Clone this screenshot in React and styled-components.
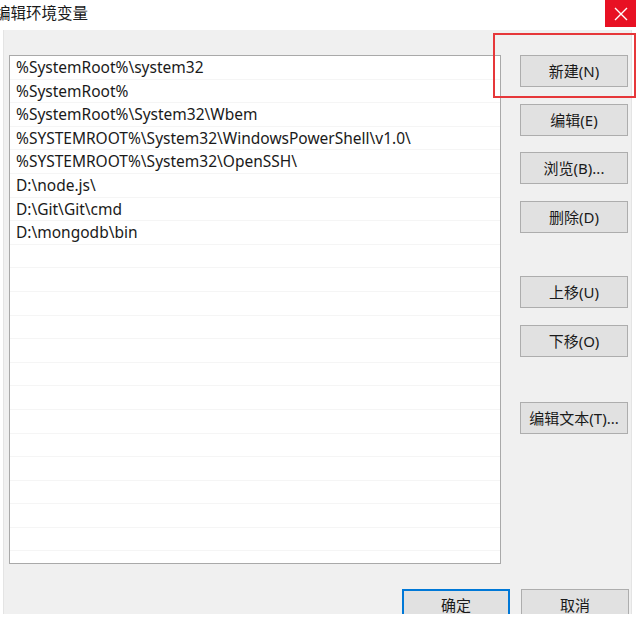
import styled, { createGlobalStyle } from 'styled-components';

const GlobalStyle = createGlobalStyle`
  html, body {
    margin: 0;
    padding: 0;
    background: #ffffff;
  }
  body {
    font-family: "Noto Sans", "Noto Sans CJK SC", sans-serif;
  }
`;

const Window = styled.div`
  position: relative;
  width: 640px;
  height: 618px;
  background: #ffffff;
  overflow: hidden;
`;

const TitleBar = styled.div`
  height: 30px;
  display: flex;
  align-items: flex-start;
  justify-content: space-between;
`;

const Title = styled.div`
  margin-left: -5px;
  padding-top: 2px;
  font-family: "Noto Sans CJK SC", sans-serif;
  font-size: 15.5px;
  line-height: 20px;
  color: #1a1a1a;
`;

const CloseButton = styled.div`
  width: 31px;
  height: 27px;
  margin-right: 4px;
  background: #e81123;
  display: flex;
  align-items: center;
  justify-content: center;
`;

const Body = styled.div`
  margin-left: 3px;
  width: 629px;
  height: 584px;
  box-sizing: border-box;
  background: #f0f0f0;
  border-left: 1px solid #e4e4e4;
  border-right: 1px solid #e4e4e4;
  padding: 25px 0 0 5px;
  overflow: hidden;
`;

const Main = styled.div`
  display: flex;
  align-items: flex-start;
`;

const ListBox = styled.div`
  width: 492px;
  height: 509px;
  box-sizing: border-box;
  background: #ffffff;
  border: 1px solid #a9a9a9;
  overflow: hidden;
`;

const Row = styled.div`
  height: 23.6px;
  box-sizing: border-box;
  border-bottom: 1px solid #f5f5f5;
  padding-left: 6px;
  font-family: "Noto Sans", sans-serif;
  font-size: 15.5px;
  line-height: 23px;
  color: #1a1a1a;
  white-space: nowrap;
`;

const Side = styled.div`
  margin-left: 19px;
  display: flex;
  flex-direction: column;
`;

const Button = styled.div`
  width: 108px;
  height: 32px;
  box-sizing: border-box;
  margin-top: ${p => p.$gap || 0}px;
  padding-bottom: 2px;
  background: #e1e1e1;
  border: ${p => (p.$primary ? '2px solid #0078d7' : '1px solid #adadad')};
  display: flex;
  align-items: center;
  justify-content: center;
  font-family: "Noto Sans", "Noto Sans CJK SC", sans-serif;
  font-size: 15px;
  color: #1a1a1a;
`;

const Footer = styled.div`
  margin-top: 25px;
  padding-right: 1px;
  display: flex;
  justify-content: flex-end;
  gap: 11px;
  width: 620px;
`;

const Highlight = styled.div`
  position: absolute;
  left: 493px;
  top: 33px;
  width: 143px;
  height: 65px;
  box-sizing: border-box;
  border: 2px solid #e6373a;
  pointer-events: none;
`;

const paths = [
  '%SystemRoot%\\system32',
  '%SystemRoot%',
  '%SystemRoot%\\System32\\Wbem',
  '%SYSTEMROOT%\\System32\\WindowsPowerShell\\v1.0\\',
  '%SYSTEMROOT%\\System32\\OpenSSH\\',
  'D:\\node.js\\',
  'D:\\Git\\Git\\cmd',
  'D:\\mongodb\\bin',
];

const rows = [...paths, ...Array(14).fill('')];

const actions = [
  { label: '新建(N)', gap: 0 },
  { label: '编辑(E)', gap: 17 },
  { label: '浏览(B)...', gap: 16 },
  { label: '删除(D)', gap: 17 },
  { label: '上移(U)', gap: 43 },
  { label: '下移(O)', gap: 17 },
  { label: '编辑文本(T)...', gap: 45 },
];

export default function App() {
  return (
    <Window>
      <GlobalStyle />
      <TitleBar>
        <Title>编辑环境变量</Title>
        <CloseButton>
          <svg width="14" height="14" viewBox="0 0 14 14">
            <path d="M1 1 L13 13 M13 1 L1 13" stroke="#ffffff" strokeWidth="1.4" />
          </svg>
        </CloseButton>
      </TitleBar>
      <Body>
        <Main>
          <ListBox>
            {rows.map((r, i) => (
              <Row key={i}>{r}</Row>
            ))}
          </ListBox>
          <Side>
            {actions.map(a => (
              <Button key={a.label} $gap={a.gap}>{a.label}</Button>
            ))}
          </Side>
        </Main>
        <Footer>
          <Button $primary>确定</Button>
          <Button>取消</Button>
        </Footer>
      </Body>
      <Highlight />
    </Window>
  );
}
